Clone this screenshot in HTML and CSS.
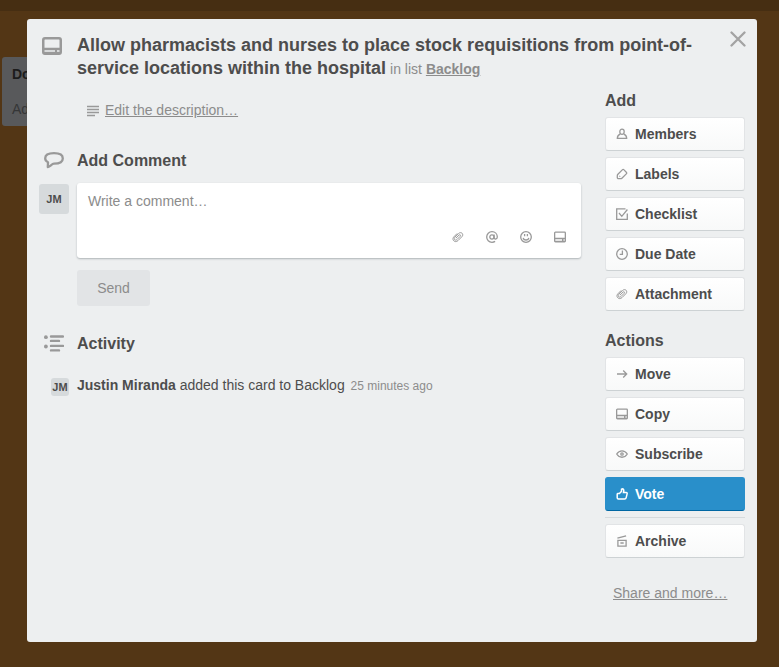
FILE: index.html
```html
<!DOCTYPE html>
<html lang="en">
<head>
<meta charset="utf-8">
<title>Card details</title>
<link rel="stylesheet" href="styles.css">
</head>
<body>
<svg class="sprite" aria-hidden="true">
  <symbol id="card" viewBox="0 0 12 12"><rect x=".65" y="1.150" width="10.700" height="9.700" rx=".8"/><path d="M1 7.500h10M1 10.300h10M8 9h1.500"/></symbol>
  <symbol id="clip" viewBox="0 0 12 12"><path d="M3.900 7.200 7 4.100c1-1 2.200.2 1.200 1.200L5.100 8.400c-1.900 1.800-4-.2-2.200-2.200l3.700-3.700c2.500-2.400 5.700.7 3.300 3.200L6 9.600C3.200 12.400-.8 8.800 1.800 5.900l3.400-3.500"/></symbol>
</svg>
<div class="topbar"></div>
<div class="list"><strong>Done</strong><span>Add a card…</span></div>
<div class="window">
  <button class="close" aria-label="Close"><svg viewBox="0 0 16 16"><path d="M1.5 1.5l13 13M14.5 1.5l-13 13"/></svg></button>
  <header>
    <svg class="head-icon" viewBox="0 0 20 18"><rect x="1.25" y="1.25" width="17.5" height="15.5" rx="1.7"/><path d="M2 12h16M2 16h16M13 14.2h2"/></svg>
    <h1>Allow pharmacists and nurses to place stock requisitions from point-of-service locations within the hospital <small>in list <a>Backlog</a></small></h1>
  </header>
  <div class="columns">
    <main>
      <div class="description"><svg viewBox="0 0 12 12"><path d="M0 1.500h12M0 4.500h12M0 7.500h12M0 10.500h8"/></svg><a>Edit the description…</a></div>
      <section class="comments">
        <h2><svg class="bubble" viewBox="0 0 20 17"><path d="M10 1.200c5 0 8.800 1.700 8.800 5.200 0 3.700-4 5.100-8.800 5.300-2.500.2-3.500 2.800-6.200 3.300l.2-4.800C2.300 9.500 1.200 8.400 1.200 6.300 1.200 3 5 1.200 10 1.200z"/></svg>Add Comment</h2>
        <div class="composer">
          <span class="avatar">JM</span>
          <div class="compose-body">
            <div class="comment-box">
              <span>Write a comment…</span>
              <div class="tools">
                <svg class="clip" viewBox="0 0 12 12"><use href="#clip"/></svg>
                <svg viewBox="0 0 12 12"><circle cx="5.900" cy="6" r="2.100"/><path d="M8.100 3.600v3.200c0 1.900 3.200 1.600 3.200-.8C11.300 2.700 8.900.7 6 .7S.7 3.100.7 6 3 11.300 6 11.300c1.300 0 2.200-.3 3.100-.9"/></svg>
                <svg viewBox="0 0 12 12"><circle cx="6" cy="6" r="5.300"/><path d="M4.600 3v2.300M7.400 3v2.300M3.200 6.900c.6 2.800 5 2.800 5.600 0"/></svg>
                <svg viewBox="0 0 12 12"><use href="#card"/></svg>
              </div>
            </div>
            <button class="send">Send</button>
          </div>
        </div>
      </section>
      <section class="activity">
        <h2><svg class="activity-icon" viewBox="0 0 20 17"><path d="M7 1.500h12M7 5.900h8M7 10.900h12M7 15.400h8"/><circle cx="1.900" cy="2.200" r="1.900"/><circle cx="1.900" cy="11.500" r="1.900"/></svg>Activity</h2>
        <div class="entry"><span class="avatar small">JM</span><p><strong>Justin Miranda</strong> added this card to Backlog <time>25 minutes ago</time></p></div>
      </section>
    </main>
    <aside>
      <h3>Add</h3>
      <nav>
        <button><svg viewBox="0 0 12 12"><ellipse cx="6" cy="3.700" rx="2.200" ry="2.600"/><path d="M4.300 5.800C2.200 6.800 1.300 8 1.300 10.400h9.400c0-2.400-.9-3.600-3-4.600"/></svg>Members</button>
        <button><svg viewBox="0 0 12 12"><path d="M6.300 1.900c.6-.6 1.100-.6 1.700 0L10.300 4.200c.6.600.6 1.100 0 1.700L5.900 10.200c-.4.400-.7.500-1.200.5H2.600c-.9 0-1.300-.4-1.300-1.300V7.700c0-.6.200-1 .6-1.400zM3.500 8.600l.6-.6"/></svg>Labels</button>
        <button><svg viewBox="0 0 12 12"><path d="M9.500.8H.7v10.500h10.600V5.500M3 5l2.800 3.300 5.600-6.800"/></svg>Checklist</button>
        <button><svg viewBox="0 0 12 12"><circle cx="6" cy="6" r="5.300"/><path d="M6.400 2.600v3.700H3.700"/></svg>Due Date</button>
        <button><svg class="clip" viewBox="0 0 12 12"><use href="#clip"/></svg>Attachment</button>
      </nav>
      <h3>Actions</h3>
      <nav class="actions">
        <button><svg viewBox="0 0 12 12"><path d="M1 6h9.500M7.200 2.500 10.700 6 7.200 9.500"/></svg>Move</button>
        <button><svg viewBox="0 0 12 12"><use href="#card"/></svg>Copy</button>
        <button><svg viewBox="0 0 12 12"><path d="M.7 6C3.300 1.700 8.700 1.700 11.300 6 8.700 10.300 3.300 10.300.7 6z"/><circle cx="6" cy="6" r="1.200"/></svg>Subscribe</button>
        <button class="primary"><svg viewBox="0 0 12 12"><path d="M1.600 5.500h1.800L5.500 3.400V1.200C7.300.2 8.300 1.900 7.500 4.400h2.600c1 0 1.200.7 1 1.500l-.9 3.700c-.2.900-.7 1.300-1.600 1.300H2.400c-.8 0-1.200-.4-1.200-1.200V6.300c0-.5.100-.8.400-.8z"/></svg>Vote</button>
        <hr>
        <button><svg viewBox="0 0 12 12"><path d="M1.400 3.200 10.100.8M1.900 5.300h8.200v5.900H1.900zM1.300 5.300h9.500M4.400 8h3.300"/></svg>Archive</button>
      </nav>
      <a class="share">Share and more…</a>
    </aside>
  </div>
</div>
</body>
</html>
```
FILE: styles.css
```css
* { box-sizing: border-box; }
body {
  margin: 0;
  height: 667px;
  overflow: hidden;
  position: relative;
  background: #533615;
  color: #4d4d4d;
  font: 14px/20px "Liberation Sans", Arial, sans-serif;
}
h1, h2, h3, p { margin: 0; }
svg { fill: none; stroke: #999; stroke-width: 1.3; flex: none; }
a { color: #8c8c8c; text-decoration: underline; }
button { font: inherit; border: 0; }
.sprite { position: absolute; width: 0; height: 0; }
.topbar { height: 11px; background: #462e12; }
.list {
  position: absolute;
  left: 2px;
  top: 57px;
  width: 200px;
  height: 69px;
  padding: 7px 10px;
  display: flex;
  flex-direction: column;
  gap: 15px;
  border-radius: 3px;
  background: #58595b;
  color: #353637;
}
.list strong { color: #1c1c1c; }
.window {
  position: absolute;
  left: 27px;
  top: 19px;
  width: 730px;
  height: 623px;
  border-radius: 3px;
  background: #edeff0;
}
.close { position: absolute; right: 11px; top: 11.5px; padding: 0; width: 16px; height: 16px; background: none; }
.close svg { display: block; width: 16px; height: 16px; stroke: #a3a3a3; stroke-width: 2.3; stroke-linecap: round; }
header { display: flex; padding: 14px 50px 0 15px; gap: 15px; height: 72px; }
.head-icon { width: 20px; height: 18px; margin-top: 4px; stroke-width: 2.5; }
h1 { font-size: 18px; line-height: 23px; padding-top: 1px; }
h1 small { font-size: 14px; font-weight: normal; line-height: 1; color: #8c8c8c; margin-left: -1px; }
h1 a { font-weight: bold; }
.columns { display: flex; justify-content: space-between; padding: 0 12px; }
main { width: 542px; padding-top: 9px; }
.description { display: flex; align-items: center; gap: 6px; padding-left: 48px; height: 20px; }
.description svg { width: 12px; height: 12px; margin-top: 1px; stroke-width: 1.3; }
.comments { padding-top: 31px; }
h2 { display: flex; align-items: center; gap: 13px; padding-left: 5px; font-size: 16px; line-height: 20px; }
h2 svg { width: 20px; height: 17px; margin-bottom: 1px; }
.bubble { stroke-width: 2.3; stroke-linejoin: round; }
.activity-icon { stroke-width: 2.4; stroke-linecap: round; }
.activity-icon circle { fill: #999; stroke: none; }
.composer { display: flex; gap: 8px; margin-top: 12px; }
.avatar {
  flex: none;
  width: 30px;
  height: 30px;
  margin-top: 1px;
  border-radius: 3px;
  background: #d6dadc;
  font-size: 11px;
  font-weight: bold;
  line-height: 30px;
  text-align: center;
}
.compose-body { flex: 1; }
.comment-box {
  height: 75px;
  padding: 8px 11px;
  display: flex;
  flex-direction: column;
  justify-content: space-between;
  border-radius: 3px;
  background: #fff;
  box-shadow: 0 1px 2px #aeb3b6;
  color: #8c8c8c;
}
.tools { display: flex; justify-content: flex-end; gap: 22px; padding: 0 4px 7px 0; }
.tools svg { width: 12px; height: 12px; }
.send { display: block; width: 73px; height: 36px; margin-top: 12px; border-radius: 3px; background: #e2e4e6; color: #8c8c8c; }
.activity { padding-top: 28px; }
.entry { display: flex; gap: 8px; padding-left: 12px; margin-top: 21px; }
.avatar.small { width: 18px; height: 18px; margin-top: 3px; line-height: 18px; }
time { font-size: 12px; color: #8c8c8c; margin-left: 2px; }
aside { width: 140px; }
h3 { font-size: 16px; line-height: 20px; }
nav { display: grid; gap: 6px; margin: 6px 0 20px; }
nav button {
  display: flex;
  align-items: center;
  gap: 7px;
  height: 34px;
  padding: 0 10px;
  border: 1px solid #e2e4e6;
  border-bottom-color: #cdd2d4;
  border-radius: 3px;
  background: linear-gradient(#fff, #f8f9f9);
  color: #4d4d4d;
  font-weight: bold;
}
nav svg { width: 12px; height: 12px; }
svg.clip { stroke-width: 1; }
nav .primary { background: #298fca; border-color: #298fca; border-bottom-color: #0067a3; color: #fff; }
.primary svg { stroke: #fff; stroke-width: 1.5; }
hr { width: 100%; height: 1px; margin: 0; border: 0; background: #d6dadc; }
.actions { margin-bottom: 25px; }
.share { margin-left: 8px; }
```
